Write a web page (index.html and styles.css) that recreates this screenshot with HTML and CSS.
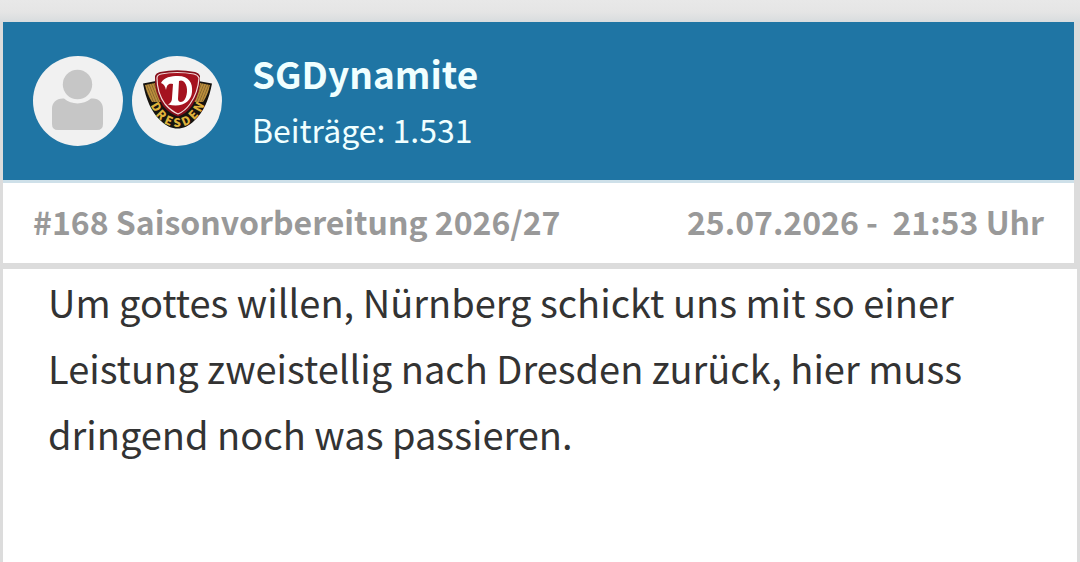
FILE: index.html
```
<!DOCTYPE html>
<html lang="de">
<head>
<meta charset="utf-8">
<meta name="viewport" content="width=device-width, initial-scale=1">
<title>Saisonvorbereitung 2026/27</title>
<link rel="stylesheet" href="styles.css">
</head>
<body>
<article class="post">
  <header class="post-header">
    <div class="avatars">
      <svg class="avatar" viewBox="0 0 90 90" aria-hidden="true">
        <circle cx="45" cy="45" r="45" fill="#f1f1f1"/>
        <path d="M30 42.500H31C39 49 50 49 58 42.500H60C66 42.500 70 47 70 53V68Q70 74 64 74H25Q19 74 19 68V53C19 47 23 42.500 30 42.500Z" fill="#c6c6c6"/>
        <circle cx="44.500" cy="28.500" r="14.700" fill="#c6c6c6"/>
      </svg>
      <svg class="avatar" viewBox="0 0 90 90" role="img" aria-label="Dynamo Dresden">
        <defs>
          <pattern id="stripes" width="2.400" height="4" patternUnits="userSpaceOnUse" patternTransform="rotate(-22)">
            <rect width="2.400" height="4" fill="#b98d3c"/>
            <rect width=".7" height="4" fill="#80602a"/>
          </pattern>
          <pattern id="stripes-right" width="2.400" height="4" patternUnits="userSpaceOnUse" patternTransform="rotate(22)">
            <rect width="2.400" height="4" fill="#b98d3c"/>
            <rect width=".7" height="4" fill="#80602a"/>
          </pattern>
        </defs>
        <circle cx="45" cy="45" r="45" fill="#f1f1f1"/>
        <path d="M11 27.500L24 25H66L80 27.500C77 43 72 56 62 65C52 75 39 75 29 65C19 56 14 43 11 27.500Z" fill="#16130f"/>
        <path d="M13 29L23 27L29 46L20 46Q15 39 13 29Z" fill="url(#stripes)"/>
        <path d="M78 29L68 27L62 46L71 46Q76 39 78 29Z" fill="url(#stripes-right)"/>
        <path d="M23 20Q24 17 28 16Q45 12.500 63 16Q67 17 68 20Q69 37 60 50Q54 58 46 60.500Q38 58 31 50Q22 37 23 20Z" fill="#84101b"/>
        <path d="M25 22Q25 19 29 18Q45 15 62 18Q66 19 67 22Q66 37 58 48Q53 55 46 58Q39 55 33 48Q25 37 25 22Z" fill="#a5121f" stroke="#f4dddd" stroke-width="1.200"/>
        <path d="M29 27C32 21 39 20 46 20C57 20 61 27 60 36C59 46 50 52 36 48.500C39 47 40 45 40 42L41 28C36 27 35 29 34 34C33 30 32 28 29 27ZM47 25L46 43C46 47 51 47 53 43C56 38 56 28 51 25Q49 24 47 25Z" fill="#fff" fill-rule="evenodd"/>
        <g class="crest-text" text-anchor="middle">
          <text transform="translate(24 51) rotate(60)" y="4">D</text>
          <text transform="translate(29 59) rotate(46)" y="4">R</text>
          <text transform="translate(36.500 65) rotate(24)" y="4">E</text>
          <text transform="translate(45 67)" y="4">S</text>
          <text transform="translate(54 65) rotate(-24)" y="4">D</text>
          <text transform="translate(61.500 59) rotate(-46)" y="4">E</text>
          <text transform="translate(67 51) rotate(-60)" y="4">N</text>
        </g>
      </svg>
    </div>
    <div class="author">
      <h2 class="author-name">SGDynamite</h2>
      <p class="author-posts">Beiträge: 1.531</p>
    </div>
  </header>
  <div class="post-meta">
    <span>#168 Saisonvorbereitung 2026/27</span>
    <time datetime="2026-07-25T21:53">25.07.2026 -&nbsp; 21:53 Uhr</time>
  </div>
  <p class="post-body">Um gottes willen, Nürnberg schickt uns mit so einer Leistung zweistellig nach Dresden zurück, hier muss dringend noch was passieren.</p>
</article>
</body>
</html>
```
FILE: styles.css
```
* { box-sizing: border-box; }

body {
  display: flex;
  flex-direction: column;
  min-height: 100vh;
  margin: 0;
  padding-top: 22px;
  background: #dcdcdc linear-gradient(#e8e8e8, #e5e5e5 12px, #d8dcde 22px) top / 100% 22px no-repeat;
  font-family: "Noto Sans CJK SC", "Noto Sans", sans-serif;
}

h2, p { margin: 0; }

.post {
  display: flex;
  flex: 1;
  flex-direction: column;
  padding: 0 3px;
}

.post-header {
  display: flex;
  align-items: center;
  gap: 30px;
  min-height: 158px;
  margin-right: 3px;
  padding: 0 30px;
  background: #1f75a4;
  color: #f0ffff;
}

.avatars {
  display: flex;
  gap: 9px;
}

.avatar {
  width: 90px;
  height: 90px;
}

.crest-text {
  fill: #dfb23c;
  font: 900 12px "Noto Sans CJK SC", sans-serif;
}

.author-name {
  font-size: 37px;
  line-height: 56px;
}

.author-posts {
  font-size: 32px;
  line-height: 56px;
}

.post-meta {
  display: flex;
  align-items: center;
  justify-content: space-between;
  min-height: 83px;
  margin-right: 3px;
  padding: 0 30px 5px;
  border-top: 3px solid #cee0e9;
  background: #fff;
  color: #999;
  font-size: 32px;
  font-weight: bold;
}

.post-body {
  flex: 1;
  margin-top: 6px;
  padding: 0 45px;
  background: #fff;
  color: #333;
  font-size: 38px;
  line-height: 66px;
}
```
